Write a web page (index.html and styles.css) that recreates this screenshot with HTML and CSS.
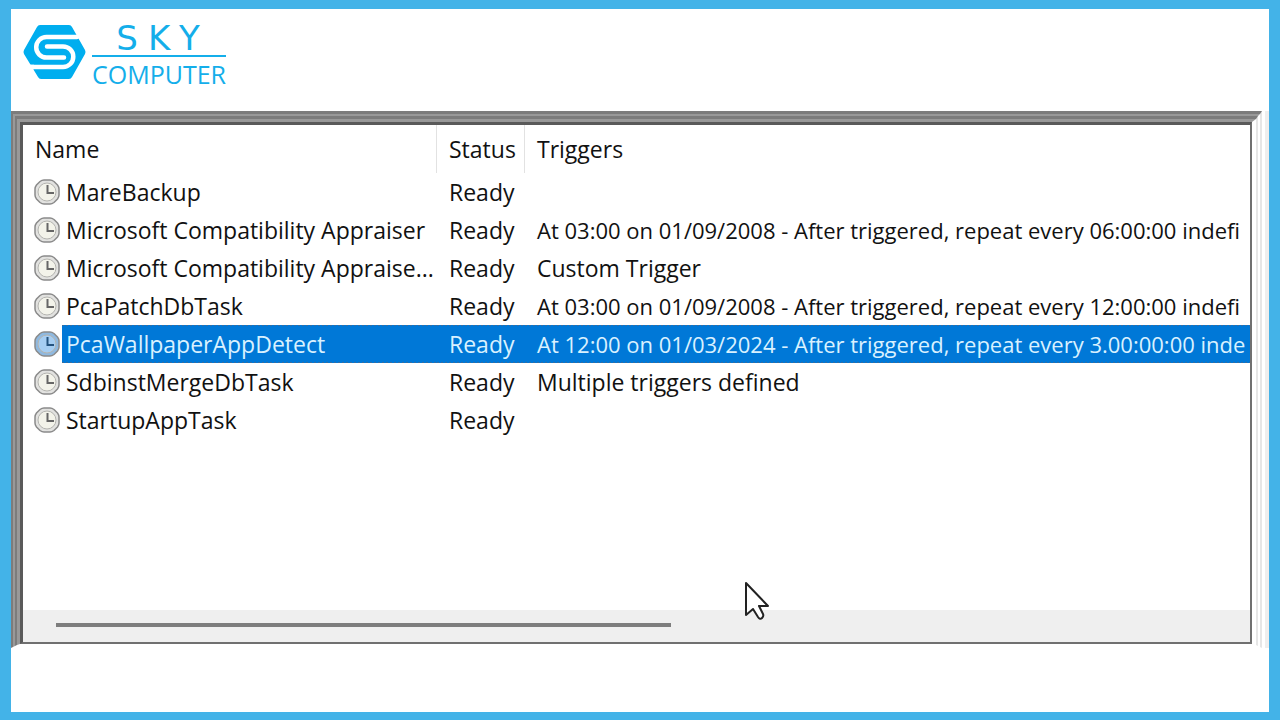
FILE: index.html
```html
<!DOCTYPE html>
<html lang="en">

<head>
    <meta charset="UTF-8">
    <meta name="viewport" content="width=device-width, initial-scale=1.0">
    <title>Sky Computer</title>
    <link rel="stylesheet" href="styles.css">
</head>

<body>
    <svg class="sprite" width="0" height="0">
        <symbol id="clock" viewBox="0 0 26 26">
            <path d="M10 1h6q2 0 4 1.500l3.500 3.500q1.500 2 1.500 4v6q0 2-1.500 4l-3.500 3.500q-2 1.500-4 1.500h-6q-2 0-4-1.500l-3.500-3.500q-1.500-2-1.500-4v-6q0-2 1.500-4l3.500-3.500q2-1.500 4-1.500z" fill="var(--rim)" stroke="#8a8a8a" stroke-width="1.5" />
            <circle cx="13" cy="13" r="9" fill="var(--face)" stroke="#b4b4b0" />
            <path d="M13.500 6v8h6.500" fill="none" stroke="var(--hands)" stroke-width="2" />
        </symbol>
    </svg>
    <header class="header">
        <a class="logo" href="#">
            <svg class="logo-mark" viewBox="0 0 64 54">
                <path d="M17 0h29q2 0 3 2l13 23q1 2 0 4L49 52q-1 2-3 2H18q-2 0-3-2L1 29q-1-2 0-4L14 2q1-2 3-2z" fill="#00aeef" />
                <path d="M54 12H23.500a10.300 10.300 0 0 0 0 20.600H41M3 42h37a10.300 10.300 0 0 0 0-20.600H24" fill="none" stroke="#fff" stroke-width="4.5" stroke-linecap="round" />
                <path d="M2 39.750h9v4.500H2z" fill="#fff" />
            </svg>
            <span class="logo-text">
                <span class="sky">SKY</span>
                <span class="computer">COMPUTER</span>
            </span>
        </a>
    </header>
    <main class="frame">
        <div class="bevel bevel-1">
            <div class="bevel bevel-2">
                <div class="bevel bevel-3">
                    <div class="bevel bevel-4">
                        <div class="bevel bevel-5">
                            <div class="list">
                                <table>
                                    <colgroup>
                                        <col class="col-name">
                                        <col class="col-status">
                                        <col>
                                    </colgroup>
                                    <thead>
                                        <tr>
                                            <th>Name</th>
                                            <th>Status</th>
                                            <th>Triggers</th>
                                        </tr>
                                    </thead>
                                    <tbody>
                                        <tr>
                                            <td class="name"><div class="task"><svg class="clock"><use href="#clock" /></svg><span>MareBackup</span></div></td>
                                            <td>Ready</td>
                                            <td></td>
                                        </tr>
                                        <tr>
                                            <td class="name"><div class="task"><svg class="clock"><use href="#clock" /></svg><span>Microsoft Compatibility Appraiser</span></div></td>
                                            <td>Ready</td>
                                            <td class="schedule">At 03:00 on 01/09/2008 - After triggered, repeat every 06:00:00 indefi</td>
                                        </tr>
                                        <tr>
                                            <td class="name"><div class="task"><svg class="clock"><use href="#clock" /></svg><span>Microsoft Compatibility Appraise...</span></div></td>
                                            <td>Ready</td>
                                            <td>Custom Trigger</td>
                                        </tr>
                                        <tr>
                                            <td class="name"><div class="task"><svg class="clock"><use href="#clock" /></svg><span>PcaPatchDbTask</span></div></td>
                                            <td>Ready</td>
                                            <td class="schedule">At 03:00 on 01/09/2008 - After triggered, repeat every 12:00:00 indefi</td>
                                        </tr>
                                        <tr class="selected">
                                            <td class="name"><div class="task"><svg class="clock"><use href="#clock" /></svg><span>PcaWallpaperAppDetect</span></div></td>
                                            <td>Ready</td>
                                            <td class="schedule">At 12:00 on 01/03/2024 - After triggered, repeat every 3.00:00:00 inde</td>
                                        </tr>
                                        <tr>
                                            <td class="name"><div class="task"><svg class="clock"><use href="#clock" /></svg><span>SdbinstMergeDbTask</span></div></td>
                                            <td>Ready</td>
                                            <td>Multiple triggers defined</td>
                                        </tr>
                                        <tr>
                                            <td class="name"><div class="task"><svg class="clock"><use href="#clock" /></svg><span>StartupAppTask</span></div></td>
                                            <td>Ready</td>
                                            <td></td>
                                        </tr>
                                    </tbody>
                                </table>
                                <div class="scrollbar">
                                    <div class="thumb"></div>
                                </div>
                            </div>
                        </div>
                    </div>
                </div>
            </div>
        </div>
    </main>
    <svg class="cursor" viewBox="0 0 26 40">
        <path d="M2 2v32l7-6 5 8q2 3 4 1t1-4l-4-8h9z" fill="#fff" stroke="#222" stroke-width="2" stroke-linejoin="round" />
    </svg>
</body>

</html>
```
FILE: styles.css
```css
body {
    margin: 0;
    box-sizing: border-box;
    min-height: 100vh;
    display: flex;
    flex-direction: column;
    position: relative;
    border: 11px solid #43b3e8;
    border-top-width: 9px;
    border-bottom-width: 8px;
    background-color: #fff;
    color: #111;
    font-family: "Open Sans", "Noto Sans", sans-serif;
    font-size: 23px;
}

.sprite {
    position: absolute;
}

/* logo */
.header {
    padding: 12px;
    height: 78px;
}

.logo {
    display: inline-flex;
    gap: 5px;
    color: #14aeea;
    text-decoration: none;
}

.logo-mark {
    width: 64px;
    height: 54px;
    margin-top: 4px;
}

.logo-text {
    display: flex;
    flex-direction: column;
    text-align: center;
}

.sky {
    font-family: "DejaVu Sans", sans-serif;
    font-size: 34px;
    line-height: 34px;
    letter-spacing: 10px;
    padding-left: 8px;
    border-bottom: 2px solid #14aeea;
}

.computer {
    font-size: 25px;
    line-height: 34px;
}

/* bevelled window edge */
.frame {
    flex: 1;
    margin-bottom: 64px;
    padding-right: 3px;
    border-right: 4px solid #eee;
    display: flex;
}

.bevel {
    flex: 1;
    min-width: 0;
    display: flex;
    border-style: solid;
}

.bevel-1 {
    border-width: 3px 2px 1px 2px;
    border-color: #7c7c7c #e6e6e6 #fff #7c7c7c;
}

.bevel-2 {
    border-width: 2px 2px 1px 2px;
    border-color: #999 #fff #fff #999;
}

.bevel-3 {
    border-width: 3px 2px 1px 2px;
    border-color: #7c7c7c #e6e6e6 #fff #7c7c7c;
}

.bevel-4 {
    border-width: 3px 4px 1px 3px;
    border-color: #999 #fff #fff #999;
}

.bevel-5 {
    border-width: 3px 2px 2px 3px;
    border-color: #5a5a5a #707070 #707070 #5a5a5a;
}

/* task list */
.list {
    flex: 1;
    min-width: 0;
    overflow: hidden;
    display: flex;
    flex-direction: column;
}

table {
    table-layout: fixed;
    width: 100%;
    border-collapse: collapse;
    white-space: nowrap;
}

.col-name {
    width: 414px;
}

.col-status {
    width: 88px;
}

th,
td {
    height: 38px;
    line-height: 38px;
    padding: 0 0 0 12px;
    text-align: left;
}

th {
    height: 48px;
    font-weight: normal;
    background: linear-gradient(#e2e2e2, #e2e2e2) right / 1px 100% no-repeat;
}

th:last-child {
    background: none;
}

.name {
    padding-left: 11px;
}

.schedule {
    font-size: 22px;
}

.task {
    display: flex;
    align-items: center;
    gap: 2px;
}

.task span {
    flex: 1;
    padding-left: 4px;
}

.clock {
    --face: #f3f3ea;
    --rim: #e2e2e0;
    --hands: #666;
    width: 26px;
    height: 26px;
}

.selected {
    --dots: repeating-linear-gradient(90deg, #3a6c9c 0 2px, #0078d7 2px 4px);
    color: #d9f1ff;
}

.selected td:not(.name),
.selected .task span {
    background-color: #0078d7;
    background-image: var(--dots), var(--dots);
    background-position: top, bottom;
    background-repeat: no-repeat;
    background-size: 100% 1px;
}

.selected .clock {
    --face: #a5cdf2;
    --rim: #8fb9e0;
    --hands: #24537f;
}

.scrollbar {
    margin-top: auto;
    padding: 13px 33px 15px;
    background-color: #efefef;
}

.thumb {
    width: 53%;
    height: 4px;
    background-color: #7d7d7d;
}

.cursor {
    position: absolute;
    left: 733px;
    top: 572px;
    width: 26px;
    height: 40px;
}
```
